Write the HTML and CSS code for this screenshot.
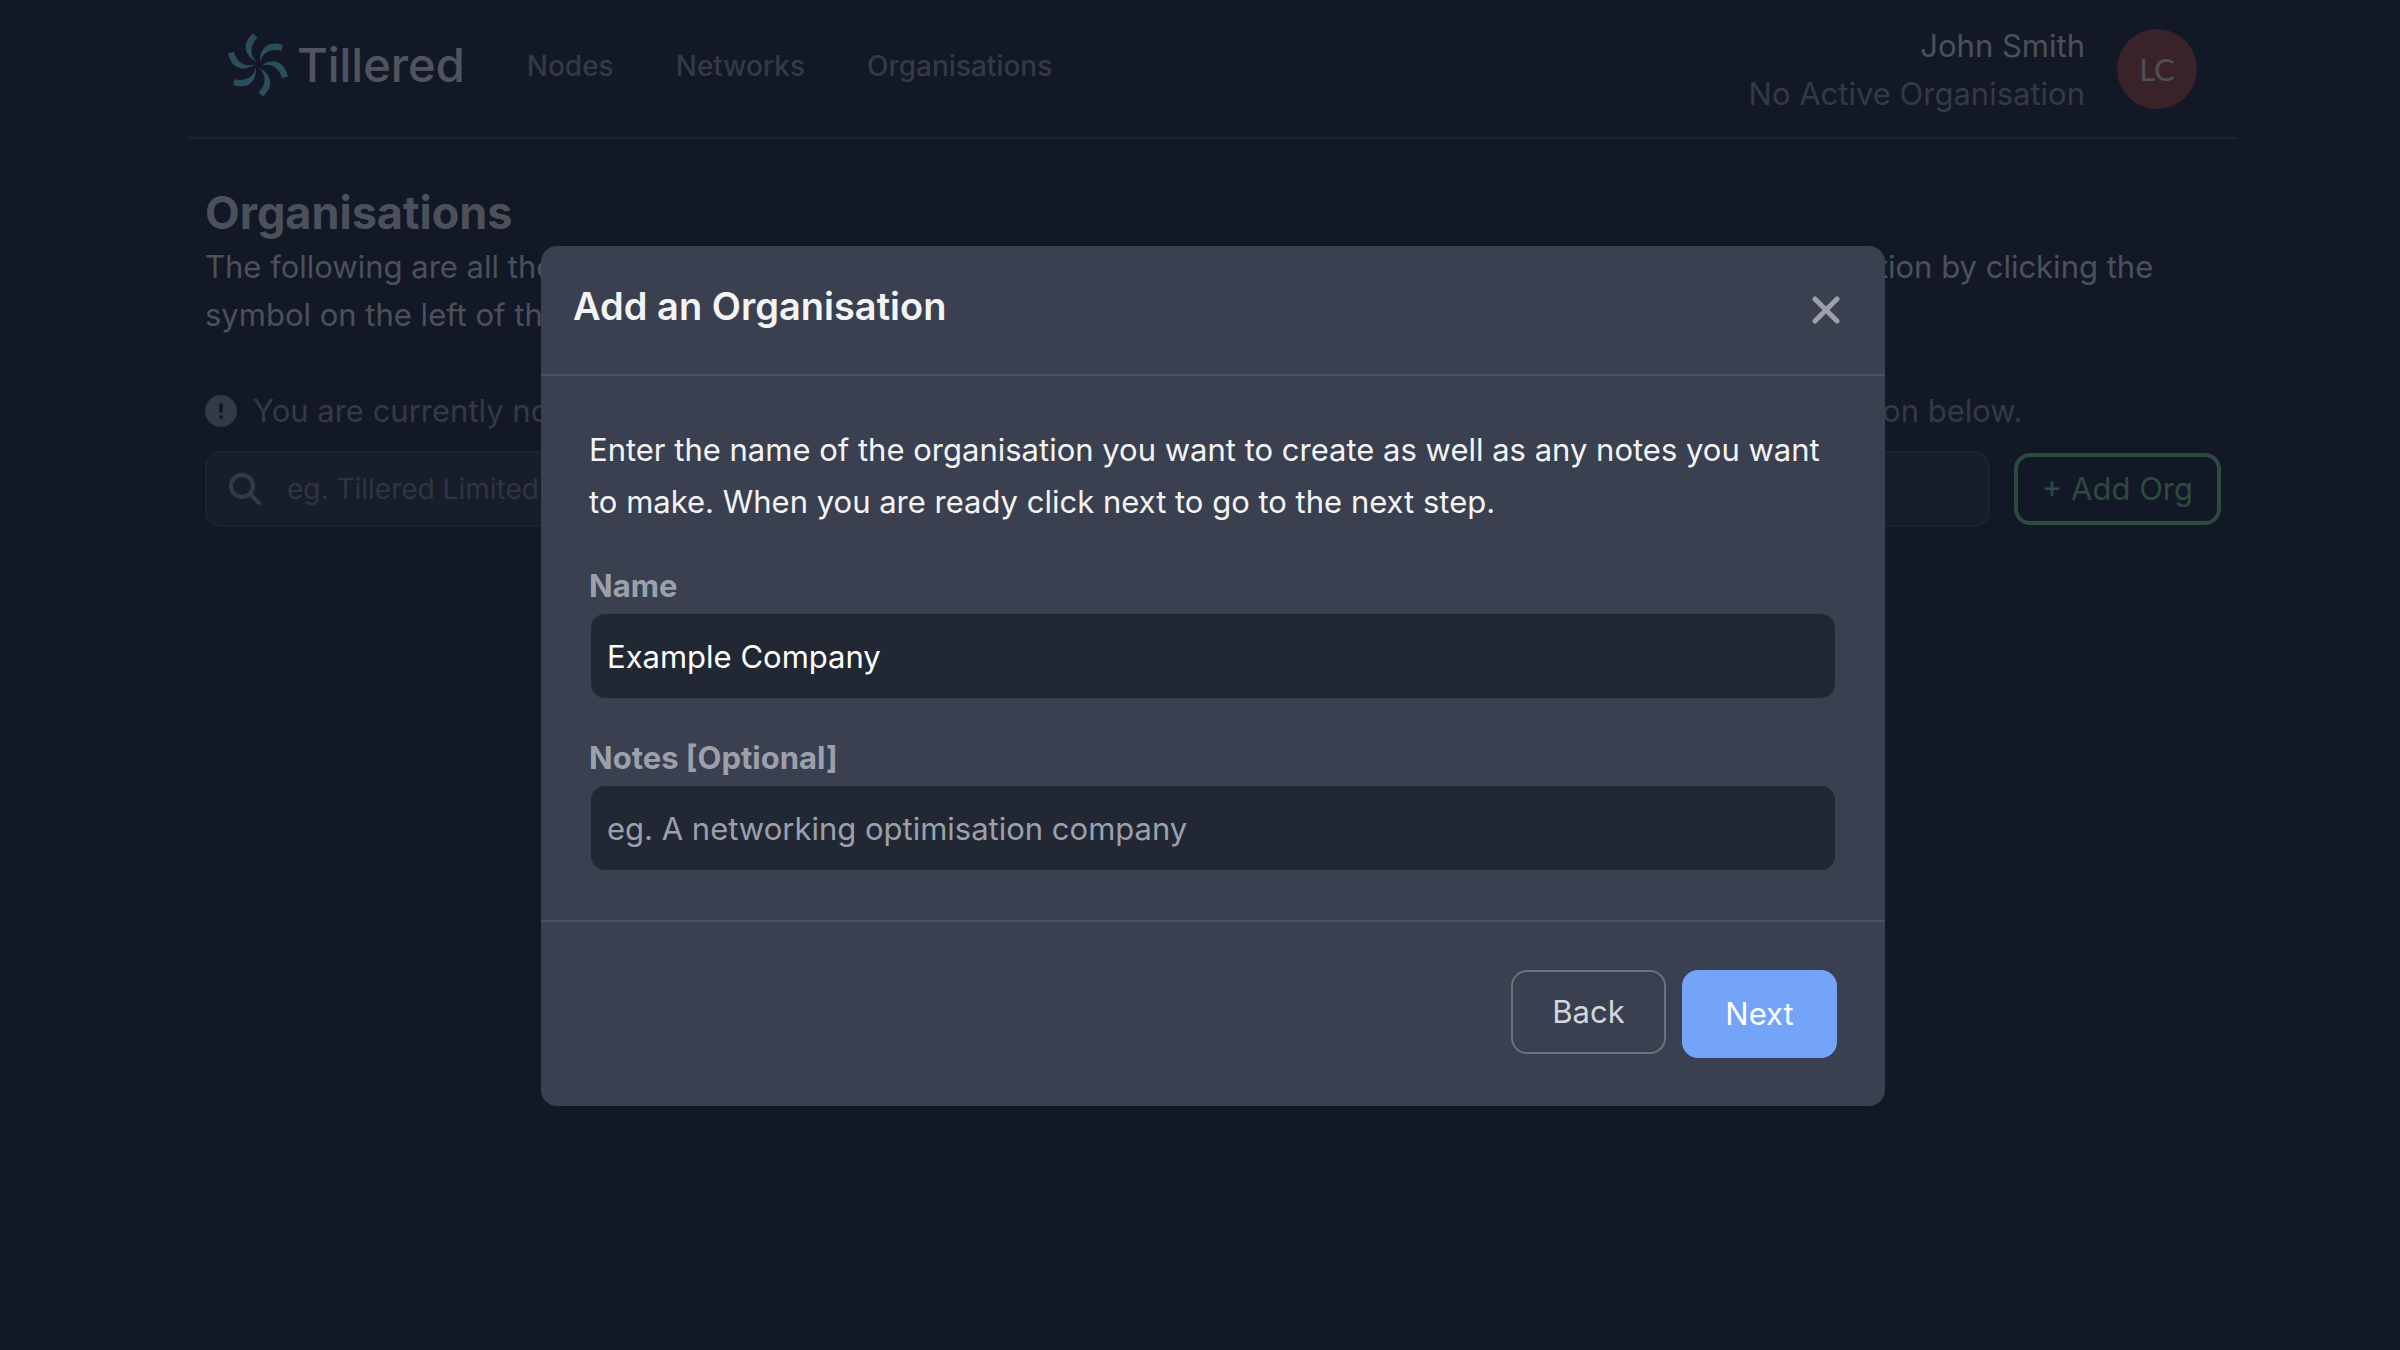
FILE: index.html
```html
<!DOCTYPE html>
<html lang="en">
<head>
    <meta charset="UTF-8">
    <meta name="viewport" content="width=device-width, initial-scale=1.0">
    <title>Tillered - Organisations</title>
    <link rel="stylesheet" href="styles.css">
</head>
<body>
    <div class="page">
        <header class="header">
            <div class="header-left">
                <a class="brand" href="#">
                    <svg class="brand-mark" viewBox="-29 -32 58 64" aria-hidden="true">
                        <defs>
                            <path id="blade" d="M-1 -3C-12 -8 -18 -20 -5 -31.5L-0.5 -27.5C-8 -20 -9 -10 -1 -3Z"/>
                        </defs>
                        <use href="#blade"/>
                        <use href="#blade" transform="rotate(60)"/>
                        <use href="#blade" transform="rotate(120)"/>
                        <use href="#blade" transform="rotate(180)"/>
                        <use href="#blade" transform="rotate(240)"/>
                        <use href="#blade" transform="rotate(300)"/>
                    </svg>
                    <span class="brand-name">Tillered</span>
                </a>
                <nav class="nav">
                    <a href="#">Nodes</a>
                    <a href="#">Networks</a>
                    <a href="#">Organisations</a>
                </nav>
            </div>
            <div class="user">
                <div class="user-text">
                    <div class="user-name">John Smith</div>
                    <div class="user-org">No Active Organisation</div>
                </div>
                <div class="avatar">LC</div>
            </div>
        </header>

        <main class="content">
            <h1>Organisations</h1>
            <p class="intro">The following are all the organisations that you are a member of. You may change your currently selected organisation by clicking the symbol on the left of the organisation.</p>

            <div class="notice">
                <svg class="notice-icon" viewBox="0 0 32 32" aria-hidden="true">
                    <path fill-rule="evenodd" d="M16 0a16 16 0 1 0 0 32a16 16 0 0 0 0-32ZM16 8a2 2 0 0 1 2 2v6a2 2 0 0 1-4 0v-6a2 2 0 0 1 2-2ZM16 20a2 2 0 1 1 0 4a2 2 0 0 1 0-4Z"/>
                </svg>
                <p>You are currently not part of any organisations. To get started you may create a new organisation using the button below.</p>
            </div>

            <div class="toolbar">
                <label class="search">
                    <svg class="search-icon" viewBox="0 0 32 32" aria-hidden="true">
                        <circle cx="13" cy="13" r="11"/>
                        <path d="M21 21L30 30"/>
                    </svg>
                    <input type="text" placeholder="eg. Tillered Limited" aria-label="Search organisations">
                </label>
                <button class="add-btn" type="button">+ Add Org</button>
            </div>
        </main>
    </div>

    <div class="overlay">
        <form class="modal" role="dialog" aria-labelledby="modalTitle">
            <div class="modal-header">
                <h2 id="modalTitle">Add an Organisation</h2>
                <button class="close-btn" type="button" aria-label="Close">
                    <svg viewBox="0 0 28 28" aria-hidden="true">
                        <path d="M3 3L25 25M25 3L3 25"/>
                    </svg>
                </button>
            </div>
            <div class="modal-body">
                <p>Enter the name of the organisation you want to create as well as any notes you want to make. When you are ready click next to go to the next step.</p>
                <div class="field">
                    <label for="orgName">Name</label>
                    <input id="orgName" type="text" value="Example Company">
                </div>
                <div class="field">
                    <label for="orgNotes">Notes [Optional]</label>
                    <input id="orgNotes" type="text" placeholder="eg. A networking optimisation company">
                </div>
            </div>
            <div class="modal-footer">
                <button class="back-btn" type="button">Back</button>
                <button class="next-btn" type="button">Next</button>
            </div>
        </form>
    </div>
</body>
</html>
```
FILE: styles.css
```css
* {
    margin: 0;
    padding: 0;
    box-sizing: border-box;
}

body {
    font-family: Inter, "Liberation Sans", sans-serif;
    font-size: 31px;
    line-height: 48px;
    background: #121825;
    color: #d0d2d6;
    min-height: 100vh;
    padding-left: 26px;
}

a {
    color: inherit;
    text-decoration: none;
}

button,
input {
    font: inherit;
    color: inherit;
}

button {
    cursor: pointer;
}

.page {
    max-width: 2048px;
    margin: 0 auto;
}

/* Header */
.header {
    display: flex;
    justify-content: space-between;
    align-items: center;
    padding: 20px 40px 19px;
    border-bottom: 2px solid #3a404f;
}

.header-left {
    display: flex;
    align-items: center;
    gap: 62px;
    padding-bottom: 6px;
}

.brand {
    display: flex;
    align-items: center;
    gap: 10px;
    padding-bottom: 2px;
}

.brand-mark {
    width: 58px;
    height: 64px;
    overflow: visible;
    fill: #69c8d9;
}

.brand-name {
    font-size: 47px;
    font-weight: 500;
    color: #e1e2e4;
}

.nav {
    display: flex;
    gap: 62px;
    font-size: 28px;
    font-weight: 500;
    color: #838693;
}

.user {
    display: flex;
    align-items: center;
    gap: 32px;
}

.user-text {
    padding-top: 2px;
    text-align: right;
}

.user-org {
    color: #838693;
}

.avatar {
    display: flex;
    align-items: center;
    justify-content: center;
    width: 80px;
    height: 80px;
    border-radius: 50%;
    background: #973935;
    font-family: Lato, sans-serif;
    font-size: 31px;
}

/* Page content */
.content {
    padding: 44px 16px;
}

h1 {
    font-size: 45px;
    line-height: 60px;
    font-weight: 700;
}

.notice {
    display: flex;
    align-items: center;
    gap: 16px;
    margin-top: 48px;
    color: #838693;
}

.notice-icon {
    width: 32px;
    height: 32px;
    fill: #838693;
}

.toolbar {
    display: flex;
    align-items: center;
    gap: 24px;
    margin-top: 16px;
}

.search {
    flex: 1;
    display: flex;
    align-items: center;
    gap: 26px;
    height: 76px;
    padding: 0 22px;
    background: #232932;
    border: 2px solid #333943;
    border-radius: 16px;
}

.search-icon {
    width: 32px;
    height: 32px;
    fill: none;
    stroke: #838693;
    stroke-width: 4;
    stroke-linecap: round;
}

.search input {
    flex: 1;
    background: none;
    border: none;
    font-size: 28px;
}

.search input::placeholder {
    color: #737783;
}

.add-btn {
    height: 72px;
    padding: 0 24px;
    background: none;
    border: 4px solid #69bf7f;
    border-radius: 16px;
    color: #69bf7f;
}

/* Modal */
.overlay {
    position: absolute;
    inset: 0;
    display: flex;
    align-items: center;
    justify-content: center;
    padding: 2px 0 0 26px;
    background: rgba(18, 24, 37, 0.7);
}

.modal {
    width: 1344px;
    max-width: 100%;
    background: #3a404f;
    border-radius: 16px;
    color: #f3f4f6;
}

.modal-header {
    display: flex;
    align-items: center;
    justify-content: space-between;
    padding: 32px;
    border-bottom: 2px solid #4c5362;
}

.modal-header h2 {
    font-size: 38px;
    line-height: 56px;
    font-weight: 600;
    padding-bottom: 8px;
}

.close-btn {
    display: flex;
    align-items: center;
    justify-content: center;
    width: 54px;
    height: 54px;
    background: none;
    border: none;
}

.close-btn svg {
    width: 28px;
    height: 28px;
    fill: none;
    stroke: #9ca0ab;
    stroke-width: 5;
    stroke-linecap: round;
}

.modal-body {
    padding: 48px;
}

.modal-body p {
    line-height: 52px;
}

.field {
    margin-top: 34px;
}

.field label {
    display: block;
    margin-bottom: 2px;
    font-weight: 700;
    color: #9ca0ab;
}

.field input {
    display: block;
    width: 100%;
    height: 88px;
    padding: 0 16px;
    background: #212834;
    border: 2px solid #3a404f;
    border-radius: 16px;
    color: #fff;
}

.field input::placeholder {
    color: #9ca0ab;
}

.modal-footer {
    display: flex;
    align-items: flex-start;
    justify-content: flex-end;
    gap: 16px;
    padding: 48px;
    border-top: 2px solid #4c5362;
}

.back-btn,
.next-btn {
    width: 155px;
    border-radius: 16px;
}

.back-btn {
    height: 84px;
    background: none;
    border: 2px solid #6c717e;
    color: #d2d5db;
}

.next-btn {
    height: 88px;
    background: #73a4f8;
    border: none;
    color: #fff;
}
```
